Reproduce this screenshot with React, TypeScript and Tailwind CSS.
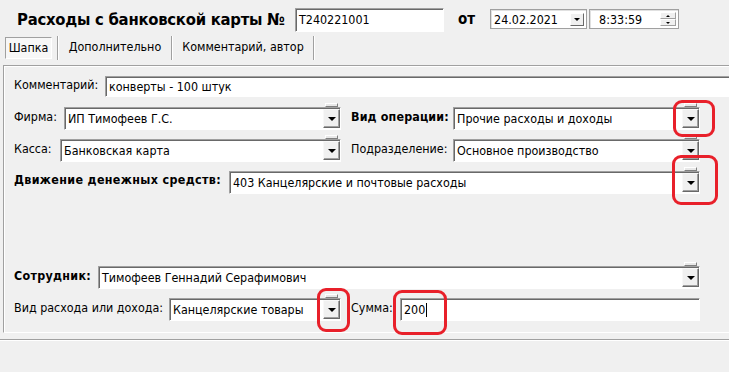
import React from "react";

function Tri() {
  return (
    <div className="h-0 w-0 border-l-[4px] border-r-[4px] border-t-[4px] border-l-transparent border-r-transparent border-t-black" />
  );
}

function DropBtn({ tab = true }: { tab?: boolean }) {
  return (
    <div className="relative h-full w-[17px] shrink-0">
      {tab && (
        <div className="absolute left-[2px] top-[-6px] h-[4px] w-[13px] border border-t-white border-l-white border-b-[#808080] border-r-[#808080] bg-[#e8e8e8]" />
      )}
      <div className="flex h-full w-full items-center justify-center border border-t-[#f8f8f8] border-l-[#f8f8f8] border-b-[#696969] border-r-[#696969] bg-[#f0f0f0] shadow-[inset_-1px_-1px_0_#a0a0a0]">
        <Tri />
      </div>
    </div>
  );
}

function Box({
  cls,
  text,
  drop,
  caret,
}: {
  cls: string;
  text: string;
  drop?: boolean;
  caret?: boolean;
}) {
  return (
    <div
      className={`flex shrink-0 border border-t-[#a0a0a0] border-l-[#a0a0a0] border-b-white border-r-white bg-white shadow-[inset_1px_1px_0_#696969] ${cls}`}
    >
      <div className="flex flex-1 items-center overflow-hidden whitespace-nowrap pl-[3px] pt-[1px]">
        {text}
        {caret && <span className="ml-[1px] inline-block h-[14px] w-px bg-black" />}
      </div>
      {drop && (
        <div className="py-[1px] pr-0">
          <DropBtn />
        </div>
      )}
    </div>
  );
}

function Red({ cls }: { cls: string }) {
  return (
    <div
      className={`pointer-events-none absolute rounded-[9px] border-[3px] border-[#e8202a] ${cls}`}
    />
  );
}

export default function App() {
  return (
    <div className="relative h-[372px] w-[729px] overflow-hidden bg-[#f0f0f0] font-['DejaVu_Sans_Condensed','DejaVu_Sans',sans-serif] text-[12.4px] text-black">
      {/* header */}
      <div className="flex h-[35px] items-start pl-[17px]">
        <div className="mt-[10px] w-[278px] shrink-0 whitespace-nowrap text-[16.5px] font-bold leading-[20px] tracking-[-0.25px]">
          Расходы с банковской карты №
        </div>
        <div className="mt-[8px] flex h-[24px] w-[149px] shrink-0 items-center border border-t-[#a0a0a0] border-l-[#a0a0a0] border-b-white border-r-white bg-white pl-[3px] shadow-[inset_1px_1px_0_#696969]">
          T240221001
        </div>
        <div className="ml-[14px] mt-[11px] text-[15px] font-bold leading-[16px]">от</div>
        <div className="ml-[15px] mt-[9px] flex h-[20px] w-[97px] shrink-0 items-center border border-[#a0a0a0] bg-white pl-[3px] shadow-[inset_1px_1px_0_#e0e0e0]">
          <span className="flex-1 pt-[2px]">24.02.2021</span>
          <div className="mr-[2px] flex h-[13px] w-[14px] items-center justify-center border border-t-white border-l-white border-b-[#696969] border-r-[#696969] bg-[#f0f0f0]">
            <div className="h-0 w-0 border-l-[3px] border-r-[3px] border-t-[3px] border-l-transparent border-r-transparent border-t-black" />
          </div>
        </div>
        <div className="ml-[2px] mt-[9px] flex h-[20px] w-[90px] shrink-0 items-center border border-[#a0a0a0] bg-white pl-[9px] shadow-[inset_1px_1px_0_#e0e0e0]">
          <span className="flex-1 pt-[2px]">8:33:59</span>
          <div className="mr-[2px] flex h-[14px] w-[16px] flex-col">
            <div className="flex flex-1 items-center justify-center border border-t-white border-l-white border-b-[#a0a0a0] border-r-[#a0a0a0] bg-[#f0f0f0]">
              <div className="h-0 w-0 border-b-[2px] border-l-[2px] border-r-[2px] border-b-black border-l-transparent border-r-transparent" />
            </div>
            <div className="flex flex-1 items-center justify-center border border-t-white border-l-white border-b-[#a0a0a0] border-r-[#a0a0a0] bg-[#f0f0f0]">
              <div className="h-0 w-0 border-t-[2px] border-l-[2px] border-r-[2px] border-t-black border-l-transparent border-r-transparent" />
            </div>
          </div>
        </div>
      </div>

      {/* tabs */}
      <div className="flex h-[25px] items-start">
        <div className="ml-[5px] mt-[2px] flex h-[22px] w-[47px] items-center justify-center border border-t-[#a0a0a0] border-l-[#a0a0a0] border-b-white border-r-white bg-[#f7f7f7] pt-[1px]">
          Шапка
        </div>
        <div className="ml-[5px] mt-[1px] h-[24px] w-[2px] border-l border-r border-l-[#a0a0a0] border-r-white" />
        <div className="flex h-[25px] w-[112px] items-center justify-center pb-[1px]">Дополнительно</div>
        <div className="mt-[1px] h-[24px] w-[2px] border-l border-r border-l-[#a0a0a0] border-r-white" />
        <div className="flex h-[25px] w-[140px] items-center justify-center pb-[1px]">Комментарий, автор</div>
        <div className="mt-[1px] h-[24px] w-[2px] border-l border-r border-l-[#a0a0a0] border-r-white" />
      </div>

      {/* panel */}
      <div className="ml-[3px] mt-[5px] h-[268px] border-b border-l border-t border-b-white border-l-[#a0a0a0] border-t-[#a0a0a0] pl-[10px] pt-[10px] shadow-[inset_1px_1px_0_white]">
        <div className="flex h-[21px] items-center">
          <div className="w-[91px] shrink-0 whitespace-nowrap pb-[2px]">Комментарий:</div>
          <Box cls="h-[21px] w-[640px]" text="конверты - 100 штук" />
        </div>

        <div className="mt-[10px] flex h-[23px] items-center">
          <div className="w-[50px] shrink-0 pb-[2px]">Фирма:</div>
          <Box cls="h-[23px] w-[277px]" text="ИП Тимофеев Г.С." drop />
          <div className="ml-[10px] w-[102px] shrink-0 whitespace-nowrap pb-[2px] font-bold tracking-[0.15px]">Вид операции:</div>
          <Box cls="h-[23px] w-[247px]" text="Прочие расходы и доходы" drop />
        </div>

        <div className="mt-[9px] flex h-[23px] items-center">
          <div className="w-[46px] shrink-0 pb-[2px]">Касса:</div>
          <Box cls="h-[23px] w-[281px]" text="Банковская карта" drop />
          <div className="ml-[10px] w-[102px] shrink-0 pb-[2px]">Подразделение:</div>
          <Box cls="h-[23px] w-[247px]" text="Основное производство" drop />
        </div>

        <div className="mt-[9px] flex h-[23px] items-center">
          <div className="w-[215px] shrink-0 whitespace-nowrap pb-[4px] font-bold tracking-[0.35px]">Движение денежных средств:</div>
          <Box cls="h-[23px] w-[471px]" text="403 Канцелярские и почтовые расходы" drop />
        </div>

        <div className="mt-[72px] flex h-[23px] items-center">
          <div className="w-[84px] shrink-0 pb-[2px] font-bold tracking-[0.3px]">Сотрудник:</div>
          <Box cls="h-[23px] w-[602px]" text="Тимофеев Геннадий Серафимович" drop />
        </div>

        <div className="mt-[9px] flex h-[23px] items-center">
          <div className="w-[155px] shrink-0 whitespace-nowrap pb-[2px]">Вид расхода или дохода:</div>
          <Box cls="h-[23px] w-[172px]" text="Канцелярские товары" drop />
          <div className="ml-[10px] w-[49px] shrink-0 pb-[2px]">Сумма:</div>
          <Box cls="h-[23px] w-[300px]" text="200" caret />
        </div>
      </div>

      <div className="mt-[6px] h-[2px] border-b border-t border-b-white border-t-[#a0a0a0]" />

      {/* annotations */}
      <Red cls="left-[673px] top-[100px] h-[37px] w-[42px]" />
      <Red cls="left-[672px] top-[155px] h-[50px] w-[46px]" />
      <Red cls="left-[317px] top-[288px] h-[44px] w-[33px]" />
      <Red cls="left-[393px] top-[290px] h-[45px] w-[54px]" />
    </div>
  );
}
